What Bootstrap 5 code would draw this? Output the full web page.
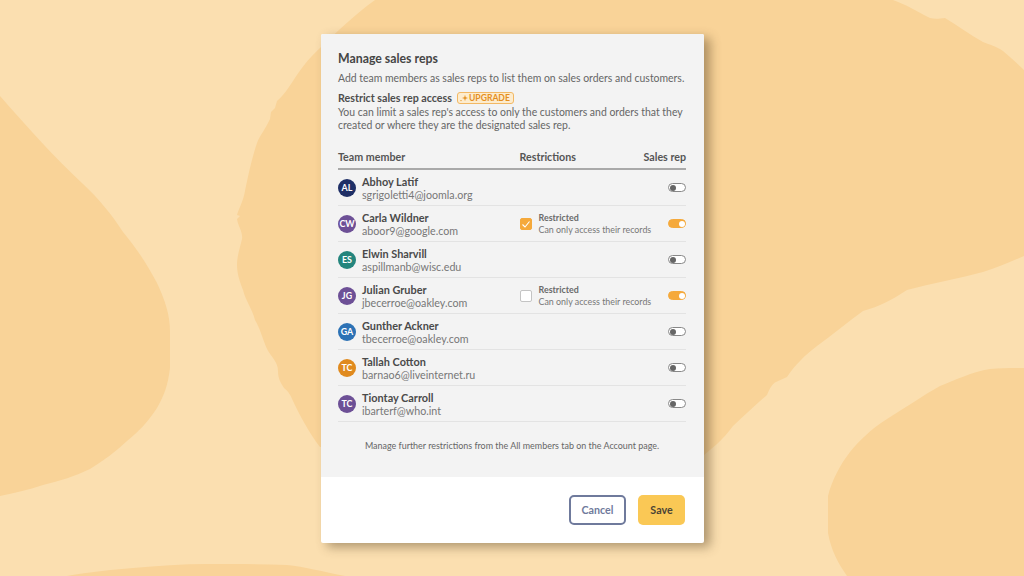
<!DOCTYPE html>
<html lang="en">
<head>
    <meta charset="UTF-8">
    <title>Manage sales reps</title>
    <link href="https://cdn.jsdelivr.net/npm/bootstrap@5.3.0/dist/css/bootstrap.min.css" rel="stylesheet">
    <style>
        html, body { height: 576px; overflow: hidden; }
        body { background: #fbdfb0; font-family: "Lato", sans-serif; color: #4a4a4a; position: relative; }
        .backdrop { position: absolute; top: 0; left: 0; width: 1024px; height: 576px; }
        .page-wrap { position: relative; height: 576px; padding-top: 34px; }
        .reps-dialog { width: 383px; height: 509px; margin-left: 321px; background: #fff; border-radius: 2px; box-shadow: 6px 4px 11px rgba(80,60,30,.45); overflow: hidden; }
        .reps-body { background: #f3f3f3; height: 443px; padding: 17px 18px 0 17px; }
        .reps-title { font-size: 12.3px; font-weight: 700; line-height: 16px; color: #454545; margin: 0 0 5px; }
        .reps-text { font-size: 10.45px; line-height: 13px; color: #666; margin: 0; white-space: nowrap; }
        .reps-gap { margin-bottom: 6px; }
        .sub-title { font-size: 10.7px; font-weight: 700; color: #4d4d4d; line-height: 14px; margin-right: 5px; }
        .sub-row { margin-bottom: 1px; }
        .upgrade-tag { font-size: 8.6px; font-weight: 700; color: #e48f1f; background: #fdecce; border: 1px solid #f2b864; border-radius: 3px; line-height: 10px; padding: 0 3px 0 2px; }
        .upgrade-tag svg { margin-right: 1px; }
        .head-row { font-size: 10.7px; font-weight: 700; color: #555; height: 21px; border-bottom: 2px solid #a9a9a9; margin-top: 17px; }
        .col-member { width: 181.5px; }
        .col-restrict { width: 116.5px; }
        .rep-row { height: 36px; border-bottom: 1px solid #e3e3e3; }
        .rep-avatar { width: 18px; height: 18px; border-radius: 50%; color: #fff; font-size: 8.9px; font-weight: 700; margin-right: 6px; }
        .rep-name { font-size: 10.9px; font-weight: 700; line-height: 13px; color: #4a4a4a; }
        .rep-mail { font-size: 10.7px; line-height: 13px; color: #777; }
        .restrict-box { width: 12px; height: 12px; border-radius: 2px; margin-right: 7px; background: #fff; border: 1px solid #c4c4c4; flex-shrink: 0; }
        .restrict-box.is-on { background: #f5a93b; border-color: #f5a93b; }
        .restrict-title { font-size: 8.9px; font-weight: 700; line-height: 11.5px; color: #6a6a6a; }
        .restrict-sub { font-size: 8.9px; line-height: 11.5px; color: #777; }
        .mini-switch { width: 18px; height: 9px; border: 1px solid #888; border-radius: 4.5px; background: #fff; padding: 0 .5px; }
        .mini-switch i { display: block; width: 6px; height: 6px; border-radius: 50%; background: #666; }
        .mini-switch.is-on { background: #f5a93b; border-color: #f5a93b; justify-content: flex-end; }
        .mini-switch.is-on i { background: #fff; }
        .reps-note { font-size: 8.95px; line-height: 12px; color: #666; text-align: center; margin: 18px 0 0; }
        .reps-foot { height: 66px; padding-right: 19px; }
        .btn-cancel { width: 57px; height: 30px; padding: 0; font-size: 10.7px; font-weight: 700; color: #6f7a9c; background: #fff; border: 2px solid #6f7a9c; border-radius: 5px; }
        .btn-save { width: 47px; height: 30px; padding: 0; margin-left: 12px; font-size: 10.7px; font-weight: 700; color: #4a4436; background: #fac855; border: 0; border-radius: 5px; }
    </style>
</head>
<body>

<svg class="backdrop" viewBox="0 0 1024 576" aria-hidden="true">
    <g fill="#f9d398">
        <path d="M0 96 C28 128 55 158 83 184 C100 200 112 215 123 232 C138 250 148 266 157 283 C165 300 170 315 170 331 L170 368 C168 385 164 396 157 408 C148 422 138 432 127 441 C115 452 103 461 90 469 C75 476 60 481 43 485 C28 490 14 493 0 496 Z"/>
        <path d="M375 0 C355 14 335 34 320 48 C307 60 300 70 293 81 C287 90 283 96 277 101 L275 108 L271 112 L270 119 C265 130 260 135 257 143 C252 158 249 172 245 191 C243 202 239 208 237 215 L240 216 L237 219 C238 226 243 232 242 239 C240 248 237 256 237 265 C237 274 240 282 243 290 C246 302 252 308 255 320 C260 328 263 340 267 349 C272 358 278 362 278 371 C278 378 280 382 284 388 C289 392 291 396 293 401 C300 416 310 434 320 447 L703 456 C712 448 722 441 733 426 C745 415 755 405 767 395 C770 388 772 384 776 382 L787 377 C795 365 805 355 817 346 C832 335 848 322 863 311 C878 307 892 300 907 290 C932 283 958 279 983 272 C997 268 1010 262 1024 256 L1024 70 C1017 63 1010 57 1003 51 C996 46 990 45 983 42 C970 35 957 25 945 18 C938 19 934 19 930 18 C918 12 905 4 893 0 Z"/>
        <path d="M1024 368 C1012 368 1000 368 990 369 C972 372 955 380 940 386 C922 396 905 408 887 419 C870 430 860 440 850 452 C840 465 832 480 828 496 L828 533 C831 550 838 563 847 576 L1024 576 Z"/>
        <path d="M67 576 C90 572 110 570 133 568 C158 566 182 564 207 564 C235 564 262 564 287 565 C305 567 320 571 345 576 Z"/>
    </g>
</svg>

<div class="page-wrap">
    <div class="reps-dialog">
        <div class="reps-body">
            <h1 class="reps-title">Manage sales reps</h1>
            <p class="reps-text reps-gap">Add team members as sales reps to list them on sales orders and customers.</p>
            <div class="sub-row d-flex align-items-center">
                <span class="sub-title">Restrict sales rep access</span>
                <span class="upgrade-tag d-inline-flex align-items-center"><svg width="8" height="8" viewBox="0 0 8 8"><circle cx="1" cy="6.6" r=".7" fill="#e48f1f"/><path d="M5 .8 5.7 3.3 8 4 5.7 4.7 5 7.2 4.3 4.7 2 4 4.3 3.3Z" fill="#e48f1f"/></svg>UPGRADE</span>
            </div>
            <p class="reps-text">You can limit a sales rep's access to only the customers and orders that they<br>created or where they are the designated sales rep.</p>

            <div class="head-row d-flex">
                <div class="col-member">Team member</div>
                <div class="col-restrict">Restrictions</div>
                <div class="flex-grow-1 text-end">Sales rep</div>
            </div>

            <div id="rep-list"></div>

            <p class="reps-note">Manage further restrictions from the All members tab on the Account page.</p>
        </div>
        <div class="reps-foot d-flex align-items-center justify-content-end">
            <button class="btn btn-cancel">Cancel</button>
            <button class="btn btn-save">Save</button>
        </div>
    </div>
</div>

<script>
    const reps = [
        { init: 'AL', color: '#1f2f66', name: 'Abhoy Latif', mail: 'sgrigoletti4@joomla.org' },
        { init: 'CW', color: '#6d5096', name: 'Carla Wildner', mail: 'aboor9@google.com', on: true, checked: true },
        { init: 'ES', color: '#24857d', name: 'Elwin Sharvill', mail: 'aspillmanb@wisc.edu' },
        { init: 'JG', color: '#6d5096', name: 'Julian Gruber', mail: 'jbecerroe@oakley.com', on: true, checked: false },
        { init: 'GA', color: '#2d72b5', name: 'Gunther Ackner', mail: 'tbecerroe@oakley.com' },
        { init: 'TC', color: '#e08a1e', name: 'Tallah Cotton', mail: 'barnao6@liveinternet.ru' },
        { init: 'TC', color: '#6d5096', name: 'Tiontay Carroll', mail: 'ibarterf@who.int' }
    ];

    const tick = '<svg width="10" height="10" viewBox="0 0 10 10"><path d="M1.5 5.5 4 8 8.5 2.5" fill="none" stroke="#fff" stroke-width="1.1"/></svg>';

    document.getElementById('rep-list').innerHTML = reps.map(r => `
        <div class="rep-row d-flex align-items-center">
            <div class="col-member d-flex align-items-center">
                <span class="rep-avatar d-flex align-items-center justify-content-center" style="background:${r.color}">${r.init}</span>
                <div>
                    <div class="rep-name">${r.name}</div>
                    <div class="rep-mail">${r.mail}</div>
                </div>
            </div>
            <div class="col-restrict d-flex align-items-center">
                ${r.on ? `
                <span class="restrict-box d-flex align-items-center justify-content-center ${r.checked ? 'is-on' : ''}">${r.checked ? tick : ''}</span>
                <div>
                    <div class="restrict-title">Restricted</div>
                    <div class="restrict-sub text-nowrap">Can only access their records</div>
                </div>` : ''}
            </div>
            <div class="flex-grow-1 d-flex justify-content-end">
                <span class="mini-switch d-flex align-items-center ${r.on ? 'is-on' : ''}"><i></i></span>
            </div>
        </div>`).join('');
</script>

<script src="https://cdn.jsdelivr.net/npm/bootstrap@5.3.0/dist/js/bootstrap.bundle.min.js"></script>
</body>
</html>
